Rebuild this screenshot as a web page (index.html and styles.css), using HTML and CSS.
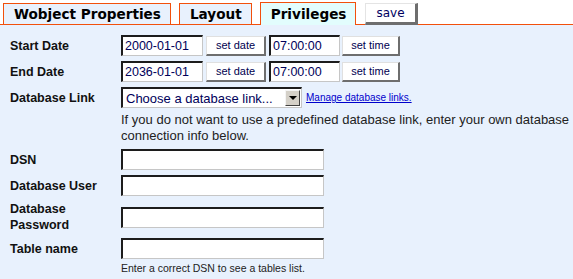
FILE: index.html
```html
<!DOCTYPE html>
<html lang="en">
<head>
    <meta charset="UTF-8">
    <title>Wobject Privileges</title>
    <link rel="stylesheet" href="styles.css">
</head>
<body>
    <div class="tabbar">
        <a href="#" class="tab">Wobject Properties</a>
        <a href="#" class="tab">Layout</a>
        <a href="#" class="tab active">Privileges</a>
        <button class="save">save</button>
    </div>

    <div class="panel">
        <div class="form">
            <label class="label">Start Date</label>
            <div class="field">
                <input class="input date" value="2000-01-01">
                <button class="btn date-btn">set date</button>
                <input class="input time" value="07:00:00">
                <button class="btn time-btn">set time</button>
            </div>

            <label class="label">End Date</label>
            <div class="field">
                <input class="input date" value="2036-01-01">
                <button class="btn date-btn">set date</button>
                <input class="input time" value="07:00:00">
                <button class="btn time-btn">set time</button>
            </div>

            <label class="label">Database Link</label>
            <div class="field">
                <div class="select-box">
                    <select class="select">
                        <option>Choose a database link...</option>
                    </select>
                    <span class="arrow"></span>
                </div>
                <a href="#" class="manage-link">Manage database links.</a>
            </div>

            <div class="help">If you do not want to use a predefined database link, enter your own database connection info below.</div>

            <label class="label">DSN</label>
            <div class="field"><input class="input wide"></div>

            <label class="label">Database User</label>
            <div class="field"><input class="input wide"></div>

            <label class="label">Database Password</label>
            <div class="field"><input class="input wide" type="password"></div>

            <label class="label">Table name</label>
            <div class="field"><input class="input wide"></div>

            <div class="help small">Enter a correct DSN to see a tables list.</div>
        </div>
    </div>
</body>
</html>
```

FILE: styles.css
```css
* {
    margin: 0;
    padding: 0;
    box-sizing: border-box;
}

body {
    min-height: 100vh;
    background: #e8f1fd;
    font-family: "Liberation Sans", Arial, sans-serif;
    display: flex;
    flex-direction: column;
}

/* tab strip */
.tabbar {
    display: flex;
    align-items: flex-end;
    gap: 8px;
    height: 25px;
    padding-left: 3px;
    background: #fff;
    border-bottom: 1px solid #f2500c;
}

.tab {
    display: flex;
    align-items: center;
    height: 21px;
    padding: 0 9px 0 10px;
    border: 1px solid #f2500c;
    border-bottom: none;
    background: #e8f1fd;
    color: #000;
    text-decoration: none;
    font-family: "DejaVu Sans", Verdana, sans-serif;
    font-weight: bold;
    font-size: 13.6px;
}

.tab.active {
    height: 23px;
    margin-bottom: -1px;
    background: #e2fdfd;
}

.save {
    height: 22px;
    margin-bottom: -1px;
    margin-left: 1px;
    padding: 0 10px;
    background: #fff;
    color: #000060;
    font-family: "DejaVu Sans", Verdana, sans-serif;
    font-size: 12px;
    border-style: solid;
    border-width: 1px 3px 3px 1px;
    border-color: #e4e4e4 #6e6e6e #6e6e6e #e4e4e4;
}

/* form */
.panel {
    flex: 1;
    padding: 10px 0 0 10px;
}

.form {
    display: grid;
    grid-template-columns: 105px 1fr;
    column-gap: 6px;
    row-gap: 5px;
    align-items: center;
}

.label {
    font-weight: bold;
    font-size: 12.5px;
    line-height: 16px;
    color: #111;
}

.field {
    display: flex;
    align-items: center;
}

.input {
    height: 21px;
    padding: 0 2px;
    background: #fff;
    color: #00005a;
    font-family: "Liberation Sans", Arial, sans-serif;
    font-size: 12.5px;
    border-style: solid;
    border-width: 2px 1px 1px 2px;
    border-color: #1c1c1c #c6c6c6 #c6c6c6 #1c1c1c;
    outline: none;
}

.date { width: 82px; }
.time { width: 71px; }
.wide { width: 203px; }

.btn {
    height: 20px;
    background: #fff;
    color: #000050;
    font-family: "Liberation Sans", Arial, sans-serif;
    font-size: 11px;
    border-style: solid;
    border-width: 1px 2px 2px 1px;
    border-color: #e0e0e0 #6e6e6e #6e6e6e #e0e0e0;
}

.date-btn {
    width: 60px;
    margin: 0 3px 0 3px;
}

.time-btn {
    width: 58px;
    margin-left: 2px;
}

.select-box {
    display: flex;
    align-items: center;
    width: 181px;
    height: 21px;
    background: #fff;
    border-style: solid;
    border-width: 2px 1px 1px 2px;
    border-color: #1c1c1c #c6c6c6 #c6c6c6 #1c1c1c;
}

.select {
    flex: 1;
    min-width: 0;
    height: 100%;
    padding-left: 3px;
    appearance: none;
    -webkit-appearance: none;
    border: none;
    background: transparent;
    color: #00005a;
    font-family: "Liberation Sans", Arial, sans-serif;
    font-size: 13px;
    outline: none;
}

.arrow {
    position: relative;
    width: 15px;
    height: 16px;
    margin-right: 1px;
    background: #d4d0c8;
    border: 1px solid;
    border-color: #f4f4f4 #404040 #404040 #f4f4f4;
}

.arrow::after {
    content: '';
    position: absolute;
    left: 3px;
    top: 5px;
    border-left: 4px solid transparent;
    border-right: 4px solid transparent;
    border-top: 4px solid #000;
}

.manage-link {
    margin-left: 4px;
    color: #0000cc;
    font-size: 10px;
    font-family: "Liberation Sans", Arial, sans-serif;
}

.help {
    grid-column: 2;
    margin-top: -1px;
    font-size: 13px;
    line-height: 16px;
    color: #222;
}

.help.small {
    margin-top: -3px;
    font-size: 10.5px;
    line-height: 14px;
}
```
